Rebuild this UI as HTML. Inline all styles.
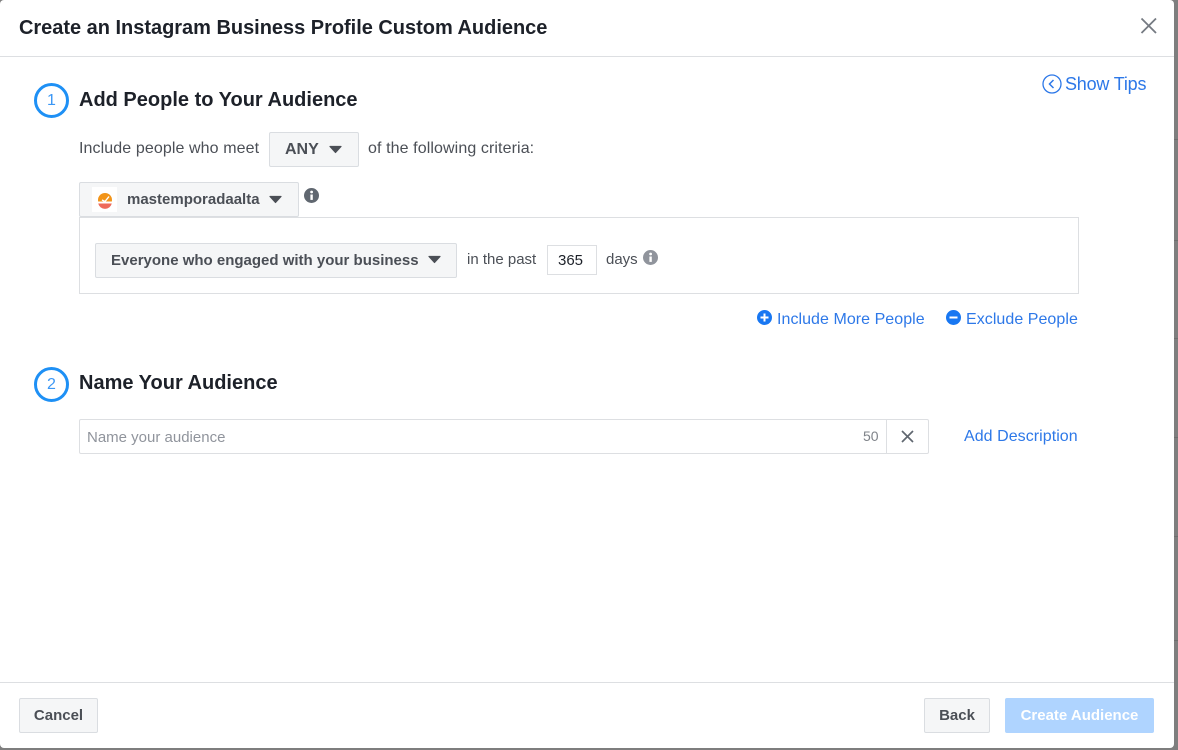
<!DOCTYPE html>
<html><head><meta charset="utf-8">
<style>
html,body{margin:0;padding:0;width:1178px;height:750px;overflow:hidden;background:#7e7e7e;font-family:"Liberation Sans",sans-serif;}
#m{position:absolute;left:0;top:0;width:1174px;height:748px;background:#fff;border-radius:4px;overflow:hidden;}
.a{position:absolute;white-space:nowrap;}
.t{color:#4b4f56;font-size:15px;line-height:18px;}
.u{font-size:16px;letter-spacing:.1px;}
.l{color:#2d78e8;font-size:16px;line-height:20px;letter-spacing:.05px;}
.h{color:#1d2129;font-size:20px;font-weight:bold;line-height:22px;}
.b{position:absolute;box-sizing:border-box;background:#f5f6f7;border:1px solid #dadde1;border-radius:2px;color:#4b4f56;font-weight:bold;font-size:15px;white-space:nowrap;}
.c{position:absolute;box-sizing:border-box;width:35px;height:35px;border:3px solid #1e90f5;border-radius:50%;color:#3b97f5;font-size:16px;text-align:center;line-height:29px;}
.line{position:absolute;background:#dddfe2;}
.s{position:absolute;left:1174px;width:4px;height:1px;background:#6e6e6e;}
</style></head><body>
<div class="s" style="top:139px"></div><div class="s" style="top:240px"></div><div class="s" style="top:338px"></div><div class="s" style="top:437px"></div><div class="s" style="top:536px"></div><div class="s" style="top:640px"></div>
<div id="m">
<div class="a h" style="left:19px;top:17px;letter-spacing:-.02px">Create an Instagram Business Profile Custom Audience</div>
<svg class="a" style="left:1139px;top:16px" width="20" height="20" viewBox="0 0 20 20"><path d="M2.5 2.5L17 17M17 2.5L2.5 17" stroke="#757a82" stroke-width="1.8" fill="none"/></svg>
<div class="line" style="left:0;top:56px;width:1174px;height:1px"></div>

<svg class="a" style="left:1042px;top:74px" width="20" height="20" viewBox="0 0 20 20"><circle cx="10" cy="10" r="9" stroke="#2d78e8" stroke-width="1.3" fill="none"/><path d="M11.5 6L7.5 10L11.5 14" stroke="#2d78e8" stroke-width="1.5" fill="none"/></svg>
<div class="a l" style="left:1065px;top:74px;font-size:18px;line-height:20px;letter-spacing:-.2px">Show Tips</div>

<div class="c" style="left:34px;top:83px">1</div>
<div class="a h" style="left:79px;top:89px">Add People to Your Audience</div>
<div class="a t u" style="left:79px;top:140px">Include people who meet</div>
<div class="b" style="left:269px;top:132px;width:90px;height:35px;font-size:16px;line-height:33px;padding-left:15px">ANY</div>
<svg class="a" style="left:328px;top:145px" width="15" height="9" viewBox="0 0 15 9"><path d="M2 1.5h11L7.5 7.5z" fill="#4b4f56" stroke="#4b4f56" stroke-width="1.2" stroke-linejoin="round"/></svg>
<div class="a t u" style="left:368px;top:140px">of the following criteria:</div>

<div class="line" style="left:79px;top:217px;width:1000px;height:1px"></div>
<div class="line" style="left:79px;top:293px;width:1000px;height:1px"></div>
<div class="line" style="left:79px;top:217px;width:1px;height:77px"></div>
<div class="line" style="left:1078px;top:217px;width:1px;height:77px"></div>
<div class="b" style="left:79px;top:182px;width:220px;height:35px;line-height:33px;padding-left:47px">mastemporadaalta</div>
<div class="a" style="left:92px;top:187px;width:25px;height:25px;background:#fff"></div>
<svg class="a" style="left:92px;top:187px" width="25" height="25" viewBox="0 0 25 25"><circle cx="13" cy="13" r="7" fill="#f29418"/><rect x="6" y="14.5" width="14" height="2" fill="#fff"/><path d="M6.2 16.5h13.6a7 7 0 0 1-13.6 0z" fill="#ee6a5a"/><path d="M10 13l3 1.5l4-5" stroke="#fff" stroke-width="1.4" fill="none"/></svg>
<svg class="a" style="left:268px;top:195px" width="15" height="9" viewBox="0 0 15 9"><path d="M2 1.5h11L7.5 7.5z" fill="#4b4f56" stroke="#4b4f56" stroke-width="1.2" stroke-linejoin="round"/></svg>
<svg class="a" style="left:304px;top:188px" width="15" height="15" viewBox="0 0 15 15"><circle cx="7.5" cy="7.5" r="7.5" fill="#606770"/><rect x="6.4" y="6.5" width="2.4" height="5.4" fill="#fff"/><circle cx="7.6" cy="4" r="1.4" fill="#fff"/></svg>

<div class="b" style="left:95px;top:243px;width:362px;height:35px;line-height:33px;padding-left:15px">Everyone who engaged with your business</div>
<svg class="a" style="left:427px;top:255px" width="15" height="9" viewBox="0 0 15 9"><path d="M2 1.5h11L7.5 7.5z" fill="#4b4f56" stroke="#4b4f56" stroke-width="1.2" stroke-linejoin="round"/></svg>
<div class="a t" style="left:467px;top:251px">in the past</div>
<div class="a" style="left:547px;top:245px;box-sizing:border-box;width:50px;height:30px;border:1px solid #dddfe2;font-size:15px;color:#1d2129;line-height:30px;padding-left:10px">365</div>
<div class="a t" style="left:606px;top:251px">days</div>
<svg class="a" style="left:643px;top:250px" width="15" height="15" viewBox="0 0 15 15"><circle cx="7.5" cy="7.5" r="7.5" fill="#90949c"/><rect x="6.4" y="6.5" width="2.4" height="5.4" fill="#fff"/><circle cx="7.6" cy="4" r="1.4" fill="#fff"/></svg>

<svg class="a" style="left:757px;top:310px" width="15" height="15" viewBox="0 0 15 15"><circle cx="7.5" cy="7.5" r="7.5" fill="#1877f2"/><path d="M3.5 7.5h8M7.5 3.5v8" stroke="#fff" stroke-width="2"/></svg>
<div class="a l" style="left:777px;top:310px">Include More People</div>
<svg class="a" style="left:946px;top:310px" width="15" height="15" viewBox="0 0 15 15"><circle cx="7.5" cy="7.5" r="7.5" fill="#1877f2"/><path d="M3.5 7.5h8" stroke="#fff" stroke-width="2"/></svg>
<div class="a l" style="left:966px;top:310px">Exclude People</div>

<div class="c" style="left:34px;top:367px">2</div>
<div class="a h" style="left:79px;top:372px">Name Your Audience</div>
<div class="a" style="left:79px;top:419px;box-sizing:border-box;width:850px;height:35px;border:1px solid #dddfe2;border-radius:2px"></div>
<div class="line" style="left:886px;top:419px;width:1px;height:35px"></div>
<div class="a" style="left:87px;top:429px;font-size:15px;line-height:18px;color:#90949c">Name your audience</div>
<div class="a" style="left:863px;top:427px;font-size:14px;line-height:18px;color:#7f8389">50</div>
<svg class="a" style="left:900px;top:429px" width="15" height="15" viewBox="0 0 15 15"><path d="M2 2L13 13M13 2L2 13" stroke="#606770" stroke-width="1.7" fill="none"/></svg>
<div class="a l" style="left:964px;top:427px">Add Description</div>

<div class="line" style="left:0;top:682px;width:1174px;height:1px"></div>
<div class="b" style="left:19px;top:698px;width:79px;height:35px;line-height:33px;text-align:center">Cancel</div>
<div class="b" style="left:924px;top:698px;width:66px;height:35px;line-height:33px;text-align:center">Back</div>
<div class="b" style="left:1005px;top:698px;width:149px;height:35px;line-height:33px;text-align:center;background:#afd4ff;border-color:#afd4ff;color:#fff">Create Audience</div>
</div>
</body></html>
